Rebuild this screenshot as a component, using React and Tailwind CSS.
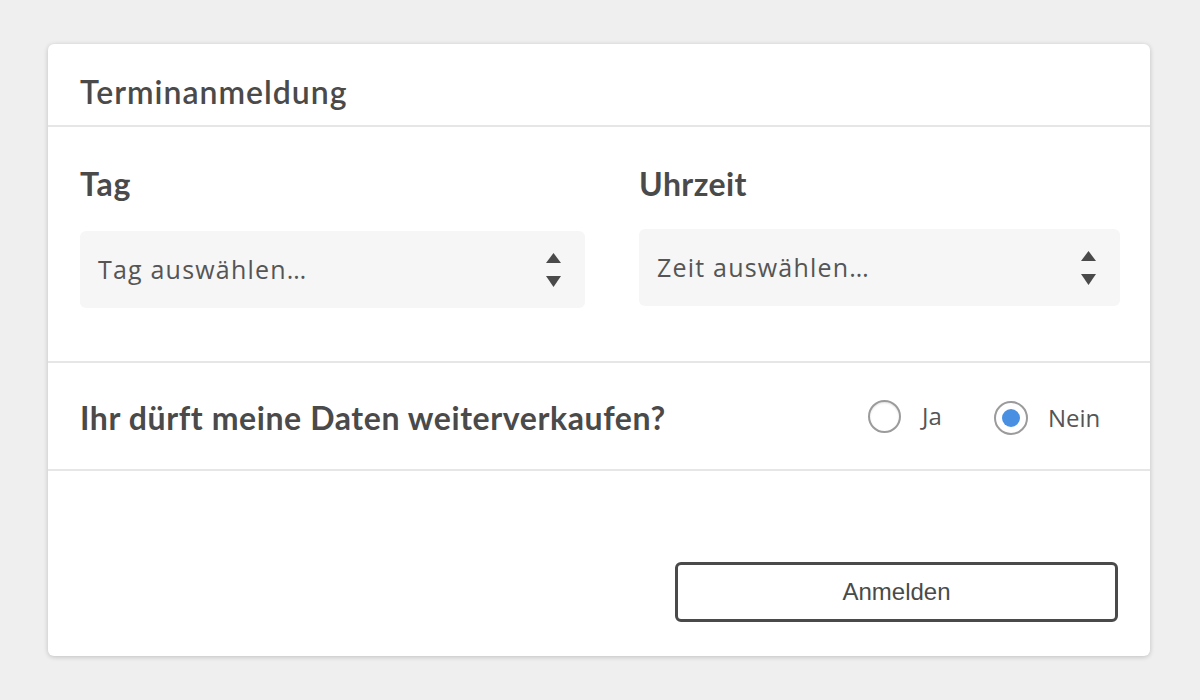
const Arrows = () => (
  <svg width="15" height="34" viewBox="0 0 15 34" className="shrink-0">
    <path d="M7.5 0 L15 10 L0 10 Z" fill="#4a4a4a" />
    <path d="M0 23 L15 23 L7.5 34 Z" fill="#4a4a4a" />
  </svg>
);

const heading = 'Lato, "Noto Sans", sans-serif';
const body = '"Open Sans", "Noto Sans", sans-serif';

const Select = ({ label, offset }) => (
  <div
    className={`h-[77px] bg-[#f6f6f6] rounded-[6px] flex items-center justify-between pl-[18px] pr-[24px] ${offset}`}
  >
    <span className="text-[25px] font-normal tracking-[1.2px] text-[#555]" style={{ fontFamily: body }}>
      {label}
    </span>
    <Arrows />
  </div>
);

const App = () => {
  return (
    <div className="min-h-screen bg-[#efefef] pt-[44px] pl-[48px]" style={{ fontFamily: heading }}>
      <div className="w-[1102px] h-[612px] bg-white rounded-[6px] shadow-[0_1px_5px_rgba(0,0,0,0.2)] flex flex-col text-[#4a4a4a]">
        {/* Header */}
        <div className="h-[83px] border-b-2 border-[#e6e6e6] px-[32px] pt-[32px]">
          <h1 className="text-[32px] font-semibold leading-[32px] tracking-[1px]">Terminanmeldung</h1>
        </div>

        {/* Tag / Uhrzeit */}
        <div className="h-[236px] border-b-2 border-[#e6e6e6] pl-[32px] pt-[41px] flex gap-[54px]">
          <div className="w-[505px]">
            <label className="block text-[32px] font-bold leading-[32px] tracking-[0.8px]">Tag</label>
            <Select label="Tag auswählen…" offset="mt-[31px]" />
          </div>
          <div className="w-[481px]">
            <label className="block text-[32px] font-bold leading-[32px] tracking-[0.4px]">Uhrzeit</label>
            <Select label="Zeit auswählen…" offset="mt-[29px]" />
          </div>
        </div>

        {/* Question */}
        <div className="h-[108px] border-b-2 border-[#e6e6e6] pl-[32px] pt-[3px] flex items-center">
          <span className="w-[788px] text-[32px] font-bold leading-[32px] tracking-[0.6px]">
            Ihr dürft meine Daten weiterverkaufen?
          </span>
          <div className="flex items-center text-[24px] font-normal text-[#555]" style={{ fontFamily: body }}>
            <label className="flex items-center -mt-[3px]">
              <span className="w-[33px] h-[33px] rounded-full border-2 border-[#9b9b9b] bg-white shadow-[inset_0_1px_2px_rgba(0,0,0,0.12)]" />
              <span className="ml-[21px] w-[23px] leading-[28px]">Ja</span>
            </label>
            <label className="flex items-center ml-[49px]">
              <span className="w-[34px] h-[34px] rounded-full border-2 border-[#9b9b9b] bg-white flex items-center justify-center">
                <span className="w-[18px] h-[18px] rounded-full bg-[#4a90e2]" />
              </span>
              <span className="ml-[20px] leading-[28px]">Nein</span>
            </label>
          </div>
        </div>

        {/* Footer */}
        <div className="flex-1 flex items-end justify-end pr-[32px] pb-[34px]">
          <button
            type="button"
            className="w-[443px] h-[60px] border-[3px] border-[#4a4a4a] rounded-[6px] bg-white text-[24px] text-[#4a4a4a]"
            style={{ fontFamily: '"Liberation Sans", Arial, sans-serif' }}
          >
            Anmelden
          </button>
        </div>
      </div>
    </div>
  );
};

export default App;
